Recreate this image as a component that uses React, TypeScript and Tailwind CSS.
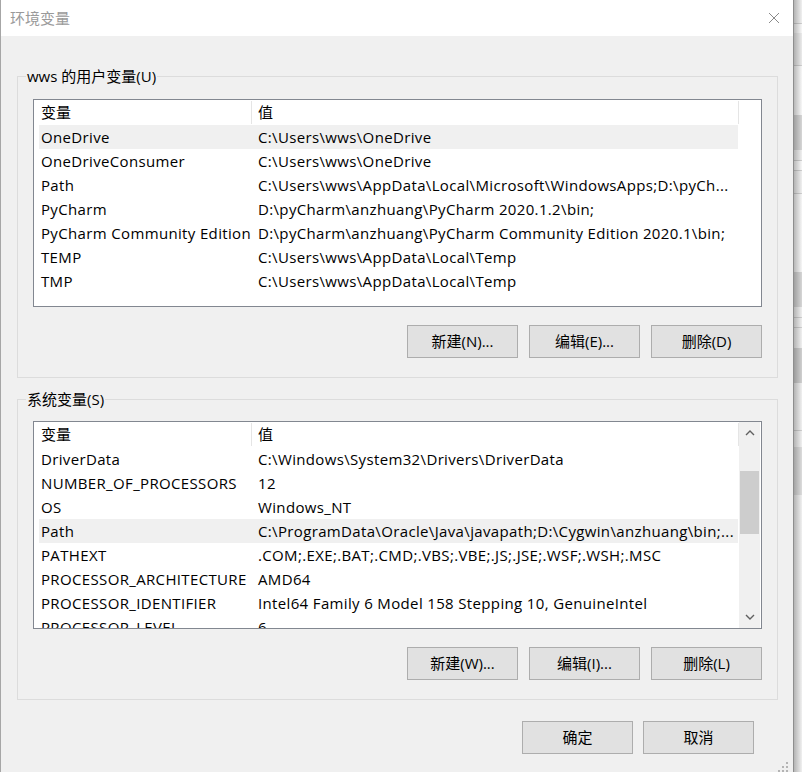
import React from 'react';

type Row = [string, string];

const userVars: Row[] = [
  ['OneDrive', 'C:\\Users\\wws\\OneDrive'],
  ['OneDriveConsumer', 'C:\\Users\\wws\\OneDrive'],
  ['Path', 'C:\\Users\\wws\\AppData\\Local\\Microsoft\\WindowsApps;D:\\pyCh...'],
  ['PyCharm', 'D:\\pyCharm\\anzhuang\\PyCharm 2020.1.2\\bin;'],
  ['PyCharm Community Edition', 'D:\\pyCharm\\anzhuang\\PyCharm Community Edition 2020.1\\bin;'],
  ['TEMP', 'C:\\Users\\wws\\AppData\\Local\\Temp'],
  ['TMP', 'C:\\Users\\wws\\AppData\\Local\\Temp'],
];

const sysVars: Row[] = [
  ['DriverData', 'C:\\Windows\\System32\\Drivers\\DriverData'],
  ['NUMBER_OF_PROCESSORS', '12'],
  ['OS', 'Windows_NT'],
  ['Path', 'C:\\ProgramData\\Oracle\\Java\\javapath;D:\\Cygwin\\anzhuang\\bin;...'],
  ['PATHEXT', '.COM;.EXE;.BAT;.CMD;.VBS;.VBE;.JS;.JSE;.WSF;.WSH;.MSC'],
  ['PROCESSOR_ARCHITECTURE', 'AMD64'],
  ['PROCESSOR_IDENTIFIER', 'Intel64 Family 6 Model 158 Stepping 10, GenuineIntel'],
  ['PROCESSOR_LEVEL', '6'],
];

const Btn = ({ label }: { label: string }) => (
  <button className="w-[111px] h-[33px] bg-[#e1e1e1] border border-[#adadad] text-[15px] leading-none text-black">
    {label}
  </button>
);

const Chevron = ({ down }: { down?: boolean }) => (
  <svg width="10" height="6" viewBox="0 0 10 6" className={down ? 'rotate-180' : ''}>
    <path d="M1 5 L5 1 L9 5" fill="none" stroke="#606060" strokeWidth="1.4" />
  </svg>
);

const VarList = ({ rows, selected, scroll }: { rows: Row[]; selected: number; scroll?: boolean }) => (
  <div className="h-[208px] border border-[#828790] bg-white flex overflow-hidden">
    <div className="w-[705px] shrink-0 overflow-hidden">
      <div className="flex h-[25px] items-center ml-[5px]">
        <div className="w-[212px] pl-[2px]">变量</div>
        <div className="w-px h-[23px] bg-[#e5e5e5]" />
        <div className="w-[486px] pl-[6px]">值</div>
        <div className="w-px h-[23px] bg-[#e5e5e5]" />
      </div>
      {rows.map(([k, v], i) => (
        <div
          key={k + i}
          className={`flex h-[24px] items-center ml-[5px] w-[699px] whitespace-nowrap tracking-[0.35px] ${i === selected ? 'bg-[#f0f0f0]' : ''}`}
        >
          <div className="w-[212px] pl-[2px] overflow-hidden">{k}</div>
          <div className="flex-1 pl-[7px] overflow-hidden">{v}</div>
        </div>
      ))}
    </div>
    {scroll && (
      <div className="w-[21px] shrink-0 bg-[#f0f0f0] flex flex-col items-center">
        <div className="h-[22px] flex items-center justify-center">
          <Chevron />
        </div>
        <div className="h-[27px]" />
        <div className="w-[19px] h-[63px] bg-[#cdcdcd]" />
        <div className="flex-1" />
        <div className="h-[22px] flex items-center justify-center">
          <Chevron down />
        </div>
      </div>
    )}
  </div>
);

const Group = ({ title, children, gap }: { title: string; children: React.ReactNode; gap: string }) => (
  <fieldset className="border border-[#dcdcdc]">
    <legend className="ml-[8px] px-[1px] leading-[20px]">{title}</legend>
    <div className={`px-[15px] pb-[19px] ${gap}`}>{children}</div>
  </fieldset>
);

// window behind the dialog, seen in the strip on the right
const bands: [string, string][] = [
  ['h-[23px]', 'bg-[#f0f0f0]'],
  ['h-px', 'bg-[#cfcfcf]'],
  ['h-[9px]', 'bg-[#f8f8f8]'],
  ['h-[32px]', 'bg-[#ebebeb]'],
  ['h-px', 'bg-[#cfcfcf]'],
  ['h-[49px]', 'bg-[#f7f7f7]'],
  ['h-[35px]', 'bg-[#d6d6d6]'],
  ['h-[10px]', 'bg-[#f0f0f0]'],
  ['h-px', 'bg-[#cfcfcf]'],
  ['h-[9px]', 'bg-[#f8f8f8]'],
  ['h-px', 'bg-[#cfcfcf]'],
  ['h-[22px]', 'bg-[#f0f0f0]'],
  ['h-px', 'bg-[#cfcfcf]'],
  ['h-[78px]', 'bg-[#f6f6f6]'],
  ['h-[35px]', 'bg-[#d6d6d6]'],
  ['h-[10px]', 'bg-[#f0f0f0]'],
  ['h-px', 'bg-[#cfcfcf]'],
  ['h-[9px]', 'bg-[#f0f0f0]'],
  ['h-px', 'bg-[#cfcfcf]'],
  ['h-[20px]', 'bg-[#f0f0f0]'],
  ['h-[35px]', 'bg-[#d0d0d0]'],
  ['h-[47px]', 'bg-[#f0f0f0]'],
  ['h-px', 'bg-[#cfcfcf]'],
  ['h-[16px]', 'bg-[#f0f0f0]'],
  ['h-[48px]', 'bg-[#dcdcdc]'],
  ['flex-1', 'bg-[#f0f0f0]'],
];

export default function App() {
  return (
    <div className="w-[802px] h-[772px] flex overflow-hidden font-['Open_Sans','Noto_Sans_CJK_SC',sans-serif] text-[15px] text-black">
      <div className="relative w-[793px] shrink-0 h-full flex flex-col border-l border-[#a6a6a6] bg-[#f0f0f0]">
        <div className="h-[36px] bg-white flex items-center justify-between pl-[9px] pr-[13px]">
          <span className="text-[#9a9a9a]">环境变量</span>
          <svg width="12" height="12" viewBox="0 0 12 12">
            <path d="M1 1 L11 11 M11 1 L1 11" stroke="#8a8a8a" strokeWidth="1" />
          </svg>
        </div>
        <div className="pl-[16px] pr-[15px] pt-[30px] flex flex-col">
          <Group title="wws 的用户变量(U)" gap="pt-[13px]">
            <VarList rows={userVars} selected={0} />
            <div className="flex justify-end gap-[11px] mt-[18px]">
              <Btn label="新建(N)..." />
              <Btn label="编辑(E)..." />
              <Btn label="删除(D)" />
            </div>
          </Group>
          <div className="mt-[11px]">
            <Group title="系统变量(S)" gap="pt-[12px]">
              <VarList rows={sysVars} selected={3} scroll />
              <div className="flex justify-end gap-[11px] mt-[18px]">
                <Btn label="新建(W)..." />
                <Btn label="编辑(I)..." />
                <Btn label="删除(L)" />
              </div>
            </Group>
          </div>
          <div className="flex justify-end gap-[10px] mt-[21px] pr-[24px]">
            <Btn label="确定" />
            <Btn label="取消" />
          </div>
        </div>
        <svg className="absolute right-[4px] bottom-0" width="12" height="10" viewBox="0 0 12 10">
          <g fill="#b4b4b4">
            <rect x="9" y="0" width="2" height="2" />
            <rect x="9" y="4" width="2" height="2" />
            <rect x="5" y="4" width="2" height="2" />
            <rect x="9" y="8" width="2" height="2" />
            <rect x="5" y="8" width="2" height="2" />
            <rect x="1" y="8" width="2" height="2" />
          </g>
        </svg>
      </div>
      <div className="relative w-[9px] h-full flex flex-col border-l border-[#8e8e8e]">
        {bands.map(([h, c], i) => (
          <div key={i} className={`${h} ${c} shrink-0`} />
        ))}
        <div className="absolute inset-0 bg-gradient-to-r from-black/25 to-transparent" />
      </div>
    </div>
  );
}
